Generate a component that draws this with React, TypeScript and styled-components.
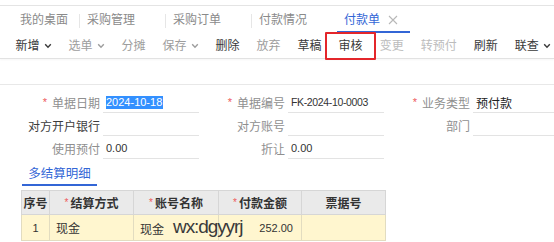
import React from 'react';
import styled, { createGlobalStyle, css } from 'styled-components';

const GlobalStyle = createGlobalStyle`
  html, body {
    margin: 0;
    padding: 0;
    background: #fff;
  }
  body {
    font-family: 'Liberation Sans', 'Noto Sans CJK SC', sans-serif;
    font-size: 12px;
    color: #333;
  }
`;

const Page = styled.div`
  width: 554px;
  height: 242px;
  overflow: hidden;
  padding-top: 5px;
  box-sizing: border-box;
`;

/* ---------- top tabs ---------- */

const TabBar = styled.div`
  display: flex;
  align-items: stretch;
  height: 27px;
  border-top: 1px solid #e4e4e4;
  padding-left: 13px;
`;

const Tab = styled.div<{ $active?: boolean; $home?: boolean }>`
  display: flex;
  align-items: center;
  box-sizing: border-box;
  padding: 3px ${({ $home }) => ($home ? '11px' : '0')} 0 7px;
  color: ${({ $active }) => ($active ? '#3366d6' : '#8a8a8a')};
  border-bottom: 2px solid ${({ $active }) => ($active ? '#3366d6' : 'transparent')};
  line-height: 14px;
  white-space: nowrap;
`;

const CloseSlot = styled.span<{ $visible?: boolean }>`
  display: inline-flex;
  align-items: center;
  width: 30px;
  padding-left: 8px;
  box-sizing: border-box;
  color: #b8b8b8;
  visibility: ${({ $visible }) => ($visible ? 'visible' : 'hidden')};
`;

const TabSep = styled.span`
  align-self: center;
  width: 1px;
  height: 14px;
  background: #e6e6e6;
  margin-top: 3px;
`;

/* ---------- toolbar ---------- */

const Toolbar = styled.div`
  display: flex;
  align-items: center;
  height: 25px;
  padding-left: 7px;
  border-bottom: 1px solid #e2e2e2;
  box-shadow: 0 1px 2px rgba(0, 0, 0, 0.04);
`;

const ToolItem = styled.span<{ $tone?: 'on' | 'off' | 'dim'; $marked?: boolean }>`
  position: relative;
  display: inline-flex;
  align-items: center;
  padding: 0 8.5px;
  line-height: 14px;
  white-space: nowrap;
  color: ${({ $tone }) =>
    $tone === 'off' ? '#9d9d9d' : $tone === 'dim' ? '#bcbcbc' : '#3a3a3a'};

  ${({ $marked }) =>
    $marked &&
    css`
      &::after {
        content: '';
        position: absolute;
        left: -5px;
        right: -5px;
        top: -7px;
        bottom: -7px;
        border: 2px solid #e3262b;
        border-radius: 1px;
      }
    `}
`;

const ToolSep = styled.span`
  width: 1px;
  height: 14px;
  background: #e0e0e0;
`;

const Chevron = styled.svg`
  margin-left: 4px;
  width: 8px;
  height: 6px;
`;

const Caret: React.FC = () => (
  <Chevron viewBox="0 0 8 6" aria-hidden="true">
    <polyline points="1.2,1.3 4,4.2 6.8,1.3" fill="none" stroke="currentColor" strokeWidth="1.4" />
  </Chevron>
);

const CrossIcon: React.FC = () => (
  <svg width="10" height="10" viewBox="0 0 10 10" aria-hidden="true">
    <path d="M1 1 L9 9 M9 1 L1 9" stroke="currentColor" strokeWidth="1.1" fill="none" />
  </svg>
);

/* ---------- form ---------- */

const Gap = styled.div`
  height: 25px;
  border-bottom: 1px solid #e8e8e8;
`;

const Form = styled.div`
  display: grid;
  grid-template-columns: repeat(3, 185px);
  grid-auto-rows: 23px;
  padding: 5px 0 0 14px;
`;

const Field = styled.div`
  display: grid;
  grid-template-columns: 86px 96px;
  column-gap: 3px;
`;

const Label = styled.div<{ $dark?: boolean }>`
  display: flex;
  align-items: center;
  justify-content: flex-end;
  padding-top: 2px;
  color: ${({ $dark }) => ($dark ? '#3c3c3c' : '#8f8f8f')};
  white-space: nowrap;
`;

const Star = styled.span`
  color: #ee5a5a;
  font-size: 11px;
  margin-right: 5px;
  position: relative;
  top: -1px;
`;

const Input = styled.div<{ $tight?: boolean }>`
  display: flex;
  align-items: center;
  padding: 2px 0 0 3px;
  border-bottom: 1px solid #e3e3e3;
  font-size: ${({ $tight }) => ($tight ? '10.5px' : '11px')};
  letter-spacing: ${({ $tight }) => ($tight ? '-0.35px' : '0')};
  color: #333;
  white-space: nowrap;
`;

const CnValue = styled.span`
  font-size: 12px;
  color: #222;
`;

const Selected = styled.span`
  background: #3390ff;
  color: #fff;
  line-height: 13px;
  padding: 0 1px 0 0;
`;

/* ---------- detail ---------- */

const DetailTabs = styled.div`
  display: flex;
  margin: 1px 0 0 22px;
`;

const DetailTab = styled.div`
  width: 75px;
  height: 24px;
  display: flex;
  align-items: center;
  justify-content: center;
  color: #3366d6;
  font-size: 12.5px;
  border-bottom: 2px solid #3366d6;
`;

const Table = styled.table`
  margin: 4px 0 0 21px;
  border-collapse: collapse;
  table-layout: fixed;
  width: 364px;
`;

const Th = styled.th`
  height: 23px;
  padding: 0;
  background: #eaeaea;
  border: 1px solid #d6d6d6;
  font-weight: bold;
  color: #333;
  text-align: center;
  font-size: 12px;
`;

const Td = styled.td<{ $align?: 'left' | 'right' | 'center' }>`
  height: 25px;
  padding: 0 ${({ $align }) => ($align === 'right' ? '8px' : '6px')};
  background: #fff6cf;
  border: 1px solid #e2dcc0;
  text-align: ${({ $align }) => $align || 'left'};
  white-space: nowrap;
  overflow: visible;
  color: #333;
`;

const Num = styled.span`
  font-size: 11px;
`;

const Handwritten = styled.span`
  font-size: 19px;
  letter-spacing: -1.1px;
  color: #3a3a3a;
  margin-left: 9px;
  position: relative;
  top: -1px;
`;

const HeadStar = styled.span`
  color: #ee5a5a;
  font-weight: normal;
  font-size: 10px;
  margin-right: 2px;
  position: relative;
  top: -2px;
`;

const tabs = [
  { label: '我的桌面', home: true },
  { label: '采购管理' },
  { label: '采购订单' },
  { label: '付款情况' },
];

type Tool = { label: string; tone?: 'on' | 'off' | 'dim'; caret?: boolean; marked?: boolean; sepBefore?: boolean };

const tools: Tool[] = [
  { label: '新增', caret: true },
  { label: '选单', tone: 'off', caret: true },
  { label: '分摊', tone: 'off' },
  { label: '保存', tone: 'off', caret: true },
  { label: '删除' },
  { label: '放弃', tone: 'off' },
  { label: '草稿' },
  { label: '审核', marked: true },
  { label: '变更', tone: 'dim' },
  { label: '转预付', tone: 'dim', sepBefore: true },
  { label: '刷新', sepBefore: true },
  { label: '联查', caret: true },
];

export default function App() {
  return (
    <>
      <GlobalStyle />
      <Page>
        <TabBar>
          {tabs.map((t, i) => (
            <React.Fragment key={t.label}>
              {i > 0 && <TabSep />}
              <Tab $home={t.home}>
                {t.label}
                {!t.home && <CloseSlot />}
              </Tab>
            </React.Fragment>
          ))}
          <Tab $active>
            付款单
            <CloseSlot $visible>
              <CrossIcon />
            </CloseSlot>
          </Tab>
        </TabBar>

        <Toolbar>
          {tools.map((t) => (
            <React.Fragment key={t.label}>
              {t.sepBefore && <ToolSep />}
              <ToolItem $tone={t.tone} $marked={t.marked}>
                {t.label}
                {t.caret && <Caret />}
              </ToolItem>
            </React.Fragment>
          ))}
        </Toolbar>

        <Gap />

        <Form>
          <Field>
            <Label><Star>*</Star>单据日期</Label>
            <Input><Selected>2024-10-18</Selected></Input>
          </Field>
          <Field>
            <Label><Star>*</Star>单据编号</Label>
            <Input $tight>FK-2024-10-0003</Input>
          </Field>
          <Field>
            <Label><Star>*</Star>业务类型</Label>
            <Input><CnValue>预付款</CnValue></Input>
          </Field>

          <Field>
            <Label $dark>对方开户银行</Label>
            <Input />
          </Field>
          <Field>
            <Label>对方账号</Label>
            <Input />
          </Field>
          <Field>
            <Label>部门</Label>
            <Input />
          </Field>

          <Field>
            <Label>使用预付</Label>
            <Input>0.00</Input>
          </Field>
          <Field>
            <Label>折让</Label>
            <Input>0.00</Input>
          </Field>
        </Form>

        <DetailTabs>
          <DetailTab>多结算明细</DetailTab>
        </DetailTabs>

        <Table>
          <colgroup>
            <col style={{ width: 28 }} />
            <col style={{ width: 84 }} />
            <col style={{ width: 85 }} />
            <col style={{ width: 83 }} />
            <col style={{ width: 84 }} />
          </colgroup>
          <thead>
            <tr>
              <Th>序号</Th>
              <Th><HeadStar>*</HeadStar>结算方式</Th>
              <Th><HeadStar>*</HeadStar>账号名称</Th>
              <Th><HeadStar>*</HeadStar>付款金额</Th>
              <Th>票据号</Th>
            </tr>
          </thead>
          <tbody>
            <tr>
              <Td $align="center"><Num>1</Num></Td>
              <Td>现金</Td>
              <Td>现金<Handwritten>wx:dgyyrj</Handwritten></Td>
              <Td $align="right"><Num>252.00</Num></Td>
              <Td />
            </tr>
          </tbody>
        </Table>
      </Page>
    </>
  );
}
